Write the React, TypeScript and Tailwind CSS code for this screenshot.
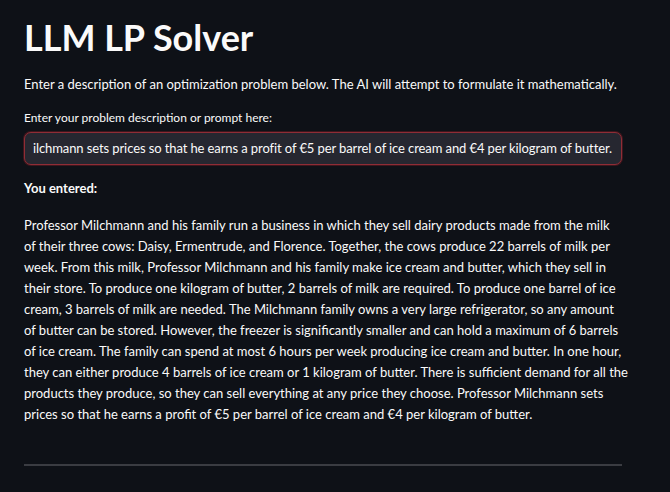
export default function App() {
  const lines = [
    'Professor Milchmann and his family run a business in which they sell dairy products made from the milk',
    'of their three cows: Daisy, Ermentrude, and Florence. Together, the cows produce 22 barrels of milk per',
    'week. From this milk, Professor Milchmann and his family make ice cream and butter, which they sell in',
    'their store. To produce one kilogram of butter, 2 barrels of milk are required. To produce one barrel of ice',
    'cream, 3 barrels of milk are needed. The Milchmann family owns a very large refrigerator, so any amount',
    'of butter can be stored. However, the freezer is significantly smaller and can hold a maximum of 6 barrels',
    'of ice cream. The family can spend at most 6 hours per week producing ice cream and butter. In one hour,',
    'they can either produce 4 barrels of ice cream or 1 kilogram of butter. There is sufficient demand for all the',
    'products they produce, so they can sell everything at any price they choose. Professor Milchmann sets',
    'prices so that he earns a profit of €5 per barrel of ice cream and €4 per kilogram of butter.',
  ]

  return (
    <main className="min-h-screen w-[670px] h-[492px] overflow-hidden bg-[#0e1117] text-[#fafafa] font-['Lato',sans-serif]">
      <div className="w-[598px] ml-6 pt-[14px]">
        <h1 className="text-[36px] leading-[46px] font-bold">LLM LP Solver</h1>

        <p className="mt-[14px] text-[13px] leading-[21px]">
          Enter a description of an optimization problem below. The AI will attempt to formulate it mathematically.
        </p>

        <label className="block mt-[15px] text-[12px] leading-[16px]">Enter your problem description or prompt here:</label>
        <div className="mt-[6px] h-[33px] rounded-[7px] bg-[#262730] border border-[#8f2d36] shadow-[0_0_0_1px_rgba(110,28,36,0.5)] flex items-center px-2 overflow-hidden">
          <span className="whitespace-nowrap text-[13px] tracking-[-0.1px]">
            ilchmann sets prices so that he earns a profit of €5 per barrel of ice cream and €4 per kilogram of butter.
          </span>
        </div>

        <p className="mt-[13px] text-[13px] leading-[21px] font-bold">You entered:</p>

        <div className="mt-[16px] text-[13px] leading-[21px]">
          {lines.map((l, i) => (
            <div key={i} className="whitespace-nowrap">{l}</div>
          ))}
        </div>

        <hr className="mt-[39px] border-0 h-[2px] bg-[#3a3c42]" />
      </div>
    </main>
  )
}
